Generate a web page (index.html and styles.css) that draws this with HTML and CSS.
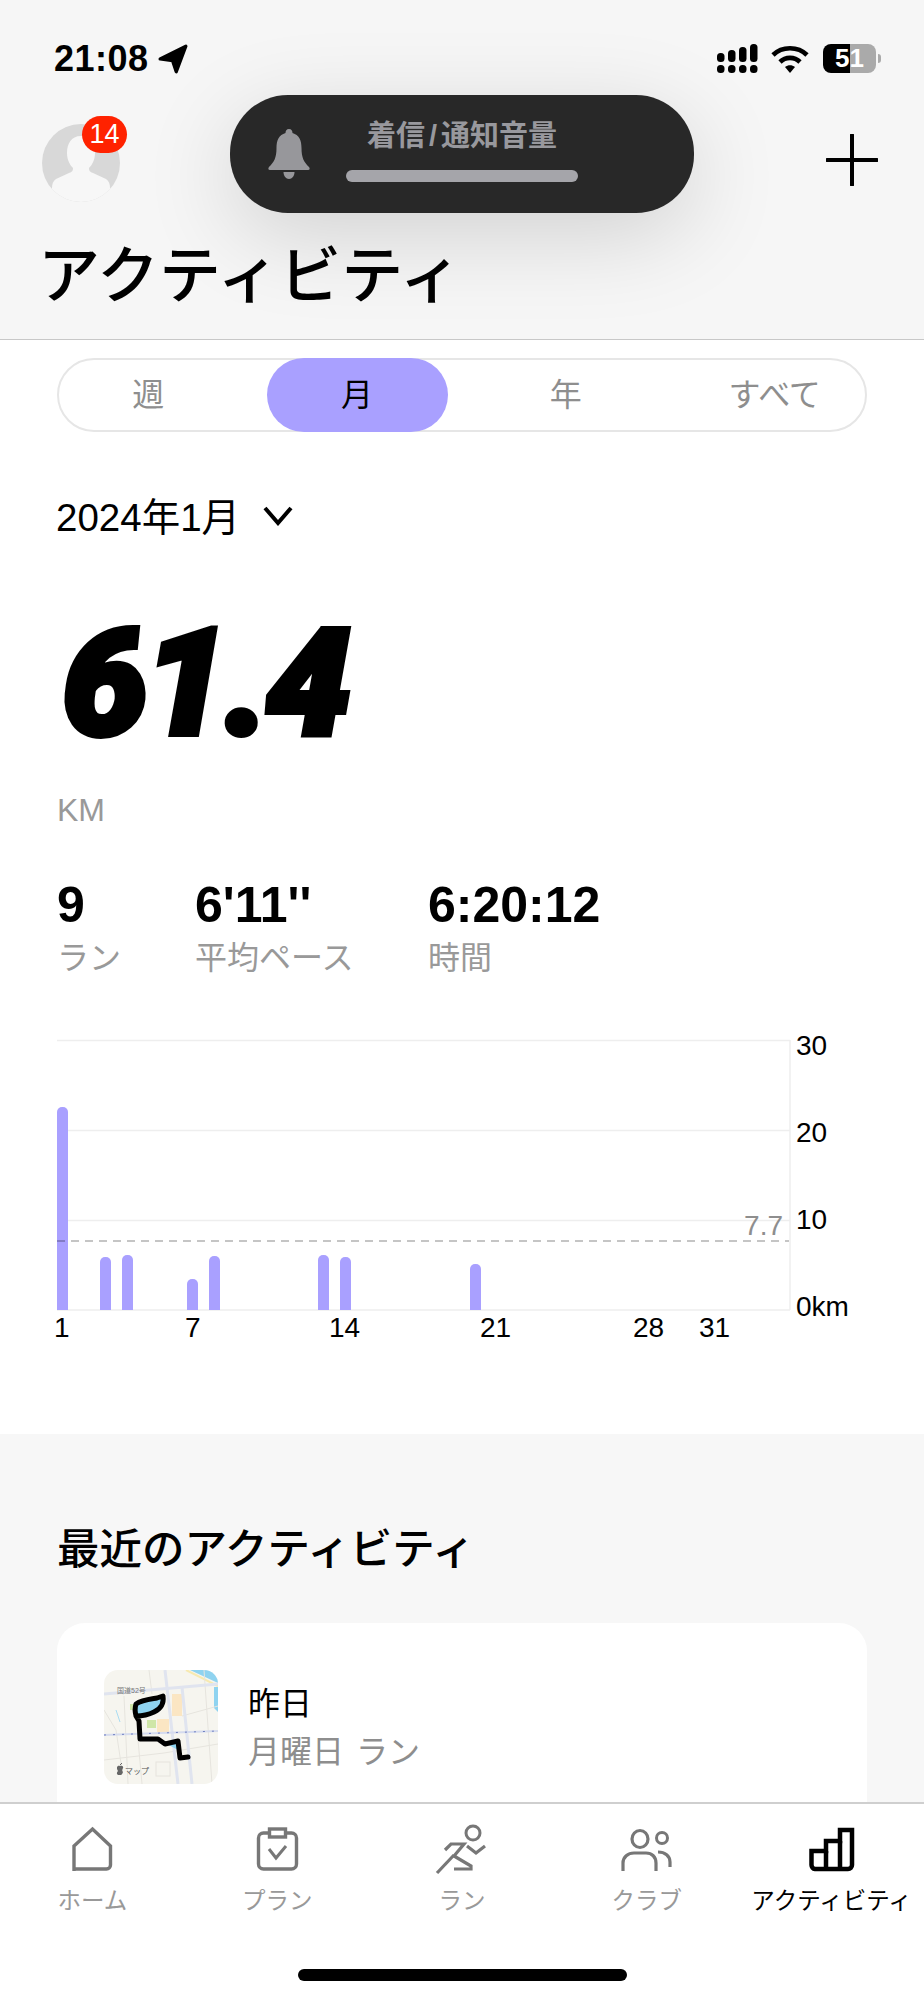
FILE: index.html
```html
<!DOCTYPE html>
<html lang="ja">
  <head>
    <title>アクティビティ</title>
    <meta charset="utf-8" />
    <meta name="viewport" content="width=device-width, initial-scale=1.0" />
    <link rel="stylesheet" href="styles.css">
  </head>

  <body>
    <div class="phone">
      <header class="top">
        <div class="status">
          <div class="clock">
            <span>21:08</span>
            <svg class="loc" viewBox="0 0 28 28" width="30" height="30">
              <path d="M2 14 L26 2 L17 26 L13.500 15.500 Z" fill="#000" stroke="#000" stroke-width="3" stroke-linejoin="round" />
            </svg>
          </div>
          <div class="status-right">
            <svg class="signal" viewBox="0 0 41 29" width="41" height="29">
              <rect x="0" y="9" width="7.5" height="9" rx="3.5" />
              <rect x="11" y="6" width="7.5" height="12" rx="3.5" />
              <rect x="22" y="3" width="7.5" height="15" rx="3.5" />
              <rect x="33" y="0" width="7.5" height="18" rx="3.5" />
              <rect x="0" y="21" width="7.5" height="8" rx="3.5" />
              <rect x="11" y="21" width="7.5" height="8" rx="3.5" />
              <rect x="22" y="21" width="7.5" height="8" rx="3.5" />
              <rect x="33" y="21" width="7.5" height="8" rx="3.5" />
            </svg>
            <svg class="wifi" viewBox="0 0 38 29" width="38" height="29">
              <path d="M2 11 C11 2 27 2 36 11" fill="none" stroke="#000" stroke-width="4.6" />
              <path d="M9 18 C14.5 12.5 23.5 12.5 29 18" fill="none" stroke="#000" stroke-width="4.6" />
              <path d="M14 23 C17 20.5 21 20.5 24 23 L19 29 Z" fill="#000" />
            </svg>
            <div class="battery"><span class="battery-num">51</span></div>
            <div class="battery-nub"></div>
          </div>
        </div>

        <div class="top-row">
          <div class="avatar">
            <svg viewBox="0 0 78 78" width="78" height="78">
              <defs>
                <clipPath id="avatarClip"><circle cx="39" cy="39" r="39" /></clipPath>
              </defs>
              <g clip-path="url(#avatarClip)">
                <rect width="78" height="78" fill="#d8d8d8" />
                <path d="M39 12 C29 12 25 20 25 29 C25 36 28 41 31 44 C31 47 30 48 27 49 L14 55 C11 57 10 60 10 64 L10 78 L68 78 L68 64 C68 60 67 57 64 55 L51 49 C48 48 47 47 47 44 C50 41 53 36 53 29 C53 20 49 12 39 12 Z" fill="#f7f7f7" />
              </g>
            </svg>
            <span class="badge">14</span>
          </div>
          <svg class="plus" viewBox="0 0 52 52" width="52" height="52">
            <path d="M26 1 V51 M1 26 H51" stroke="#000" stroke-width="4" stroke-linecap="round" fill="none" />
          </svg>
        </div>

        <h1 class="page-title">アクティビティ</h1>
      </header>

      <div class="volume">
        <svg class="bell" viewBox="0 0 42 50" width="42" height="50">
          <path d="M21 0 C18.5 0 17.5 2 17.5 4 C11 6 8.5 11 8.5 19 C8.5 29 6 33 1 38 C0 39 0 41 2 41 L40 41 C42 41 42 39 41 38 C36 33 33.5 29 33.5 19 C33.5 11 31 6 24.5 4 C24.5 2 23.5 0 21 0 Z" fill="#97979b" />
          <path d="M15.5 43 H26.5 C26.5 47 24 50 21 50 C18 50 15.5 47 15.5 43 Z" fill="#97979b" />
        </svg>
        <div class="volume-body">
          <div class="volume-title">着信 / 通知音量</div>
          <div class="volume-bar"></div>
        </div>
      </div>

      <div class="scroll">
        <section class="summary">
          <div class="segment">
            <div class="segment-item">週</div>
            <div class="segment-item active">月</div>
            <div class="segment-item">年</div>
            <div class="segment-item">すべて</div>
          </div>

          <div class="period">
            <span>2024年1月</span>
            <svg viewBox="0 0 30 20" width="30" height="20">
              <path d="M2 2 L15 17 L28 2" fill="none" stroke="#000" stroke-width="4" />
            </svg>
          </div>

          <div class="distance">61.4</div>
          <div class="unit">KM</div>

          <div class="stats">
            <div class="stat stat-runs">
              <div class="stat-value">9</div>
              <div class="stat-label">ラン</div>
            </div>
            <div class="stat stat-pace">
              <div class="stat-value">6'11''</div>
              <div class="stat-label">平均ペース</div>
            </div>
            <div class="stat">
              <div class="stat-value">6:20:12</div>
              <div class="stat-label">時間</div>
            </div>
          </div>

          <svg class="chart" viewBox="0 1030 924 320" width="924" height="320">
            <defs>
              <clipPath id="barClip"><rect x="0" y="1030" width="924" height="280" /></clipPath>
            </defs>
            <g stroke="#eeeeee" stroke-width="1.5">
              <path d="M57 1040.5 H790" />
              <path d="M57 1130.5 H790" />
              <path d="M57 1220.5 H790" />
              <path d="M57 1310 H790" />
              <path d="M790 1040 V1310" />
            </g>
            <g fill="#a9a0ff" clip-path="url(#barClip)">
              <rect x="57" y="1107" width="11" height="215" rx="5" />
              <rect x="100" y="1257" width="11" height="65" rx="5" />
              <rect x="122" y="1255" width="11" height="65" rx="5" />
              <rect x="187" y="1279" width="11" height="45" rx="5" />
              <rect x="209" y="1256" width="11" height="65" rx="5" />
              <rect x="318" y="1255" width="11" height="65" rx="5" />
              <rect x="340" y="1257" width="11" height="65" rx="5" />
              <rect x="470" y="1264" width="11" height="60" rx="5" />
            </g>
            <path d="M57 1241 H789" stroke="#000" stroke-opacity="0.3" stroke-width="1.5" stroke-dasharray="8 6" />
            <text class="avg-text" x="783" y="1235" text-anchor="end">7.7</text>
            <g class="axis-text">
              <text x="796" y="1055">30</text>
              <text x="796" y="1142">20</text>
              <text x="796" y="1229">10</text>
              <text x="796" y="1316">0km</text>
              <text x="54" y="1337">1</text>
              <text x="185" y="1337">7</text>
              <text x="329" y="1337">14</text>
              <text x="480" y="1337">21</text>
              <text x="633" y="1337">28</text>
              <text x="699" y="1337">31</text>
            </g>
          </svg>
        </section>

        <section class="recent">
          <h2 class="recent-title">最近のアクティビティ</h2>
          <div class="card">
            <svg class="map" viewBox="0 0 114 114" width="114" height="114">
              <rect width="114" height="114" fill="#f6f5ef" />
              <path d="M86 0 L114 13 V0 Z" fill="#8fd3f0" />
              <path d="M110 17 L114 17 L114 42 L110 38 Z" fill="#8fd3f0" />
              <path d="M82 0 L114 16" stroke="#f7e9b0" stroke-width="2" fill="none" />
              <rect x="68" y="24" width="10" height="22" fill="#fbe6c3" />
              <rect x="53" y="49" width="12" height="13" fill="#fbe6c3" />
              <rect x="43" y="50" width="9" height="8" fill="#cfe6a8" />
              <rect x="26" y="34" width="6" height="6" fill="#cfe6a8" />
              <g fill="none" stroke="#e6e4de" stroke-width="1">
                <path d="M20 26 L24 114" />
                <path d="M45 0 L48 24" />
                <path d="M0 90 L60 83 L114 74" />
                <path d="M78 46 L114 36" />
                <path d="M34 70 L38 114" />
                <path d="M0 40 L12 60 L18 100" />
                <rect x="52" y="92" width="14" height="14" />
                <path d="M100 0 L108 114" />
              </g>
              <path d="M12 40 L16 52" fill="none" stroke="#a9dcf2" stroke-width="1" />
              <g fill="none" stroke="#e0e4ef" stroke-width="3">
                <path d="M0 24 L114 14" />
                <path d="M61 0 L74 114" />
                <path d="M78 17 L88 114" />
              </g>
              <path d="M0 65 L114 61" fill="none" stroke="#d5dbee" stroke-width="2" />
              <path d="M0 65 L114 61" fill="none" stroke="#6f7fc0" stroke-width="1" stroke-dasharray="2 7" />
              <text class="map-road" x="13" y="23">国道52号</text>
              <path d="M32 34 C38 30 48 29 53 28 L59 26 C60 33 58 38 50 42 C44 45 38 46 32 46 Z" fill="#8fd3f0" />
              <path d="M61 73 L73 71 L74 80 Z" fill="#8fd3f0" />
              <path d="M32 46 C31 42 31 37 32 34 C38 30 48 29 53 28 L59 26 C60 33 58 38 50 42 C44 45 38 46 32 46 L35 51 L36 69 L54 69 L61 74 L74 71 L76 88 L84 87" fill="none" stroke="#000" stroke-width="5" stroke-linejoin="round" stroke-linecap="round" />
              <path d="M14 101 C12 98 13 95 16 96 C18 95 20 97 19 98 C18 100 18 101 19 102 C18 106 16 105 15 105 C13 105 12 103 14 101 Z" fill="#666" />
              <path d="M16 95 L18 93" stroke="#666" stroke-width="1" />
              <text class="map-label" x="21" y="104">マップ</text>
            </svg>
            <div class="card-text">
              <div class="card-title">昨日</div>
              <div class="card-sub">月曜日 ラン</div>
            </div>
          </div>
        </section>
      </div>

      <nav class="tabbar">
        <div class="tab">
          <svg viewBox="0 0 65 55" width="65" height="55">
            <path d="M14 50 V25 L32.5 8 L50.500 25 V44 A4 4 0 0 1 46.500 48 H14" fill="none" stroke="#777" stroke-width="3.4" />
          </svg>
          <span>ホーム</span>
        </div>
        <div class="tab">
          <svg viewBox="0 0 65 55" width="65" height="55">
            <rect x="13.5" y="12" width="38" height="36" rx="5" fill="none" stroke="#777" stroke-width="3.4" />
            <rect x="24.5" y="8" width="16" height="8" fill="#fff" stroke="#777" stroke-width="3.4" />
            <path d="M24 28 L31 37 L41 25" fill="none" stroke="#777" stroke-width="3" />
          </svg>
          <span>プラン</span>
        </div>
        <div class="tab">
          <svg viewBox="10 10 65 55" width="65" height="55">
            <circle cx="54" cy="22" r="7" fill="none" stroke="#777" stroke-width="3" />
            <path d="M26 39 L32 33 H45 L35 45 L52 55 V58 H35" fill="none" stroke="#777" stroke-width="3.2" />
            <path d="M18 62 L35 44" fill="none" stroke="#777" stroke-width="3.2" />
            <path d="M48 35 L57 42 L66 35" fill="none" stroke="#777" stroke-width="3.2" />
          </svg>
          <span>ラン</span>
        </div>
        <div class="tab">
          <svg viewBox="194 10 65 55" width="65" height="55">
            <ellipse cx="220" cy="28" rx="8" ry="8.5" fill="none" stroke="#777" stroke-width="3.2" />
            <circle cx="242" cy="27" r="5.5" fill="none" stroke="#777" stroke-width="3" />
            <path d="M203 60 V52 C203 46 208 42 214 42 H226 C232 42 236 46 236 52 V60" fill="none" stroke="#777" stroke-width="3.2" />
            <path d="M238 41 C245 41 250 45 250 51 V56" fill="none" stroke="#777" stroke-width="3.2" />
          </svg>
          <span>クラブ</span>
        </div>
        <div class="tab tab-active">
          <svg viewBox="0 0 65 55" width="65" height="55">
            <path d="M41 9 H53 V44 A4 4 0 0 1 49 48 H16 A4 4 0 0 1 12.500 44 V30 H27 V20 H41 Z" fill="none" stroke="#000" stroke-width="4.500" />
            <path d="M27 30 V48 M41 20 V48" fill="none" stroke="#000" stroke-width="4.500" />
          </svg>
          <span>アクティビティ</span>
        </div>
      </nav>
      <div class="home-bar"></div>
    </div>
  </body>
</html>
```

FILE: styles.css
```css
body {
  margin: 0;
  background-color: #fff;
  font-family: "Liberation Sans", "Noto Sans CJK JP", sans-serif;
  color: #000;
}

.phone {
  position: relative;
  width: 924px;
  height: 2000px;
  overflow: hidden;
  background-color: #fff;
}

.top {
  height: 339px;
  background-color: #f6f6f6;
  border-bottom: 1px solid #c8c8c8;
}

.status {
  display: flex;
  justify-content: space-between;
  align-items: center;
  height: 29px;
  padding: 44px 43px 0 54px;
}

.clock {
  display: flex;
  align-items: center;
  gap: 9px;
  font-size: 36px;
  font-weight: bold;
  letter-spacing: 0.5px;
}

.status-right {
  display: flex;
  align-items: center;
}

.wifi {
  margin-left: 13px;
}

.battery {
  display: flex;
  align-items: center;
  justify-content: center;
  width: 53px;
  height: 29px;
  margin-left: 14px;
  border-radius: 8px;
  background: linear-gradient(to right, #000 51%, #aaa 51%);
}

.battery-num {
  color: #fff;
  font-size: 26px;
  font-weight: bold;
}

.battery-nub {
  width: 3px;
  height: 9px;
  margin-left: 2px;
  border-radius: 0 3px 3px 0;
  background-color: #aaa;
}

.top-row {
  display: flex;
  justify-content: space-between;
  align-items: center;
  height: 80px;
  margin-top: 50px;
  padding: 0 46px 0 42px;
}

.plus {
  margin-top: -6px;
}

.avatar {
  position: relative;
  width: 78px;
  height: 78px;
}

.avatar svg {
  display: block;
}

.badge {
  position: absolute;
  left: 40px;
  top: -8px;
  width: 45px;
  height: 37px;
  border-radius: 19px;
  background-color: #ff2200;
  color: #fff;
  font-size: 27px;
  line-height: 37px;
  text-align: center;
}

.page-title {
  margin: 36px 0 0 38px;
  font-size: 62px;
  font-weight: 500;
  line-height: 76px;
}

.volume {
  position: absolute;
  left: 230px;
  top: 95px;
  display: flex;
  align-items: center;
  width: 464px;
  height: 118px;
  box-sizing: border-box;
  padding: 0 0 0 38px;
  border-radius: 58px;
  background-color: #282828;
  box-shadow: 0 22px 90px rgba(0, 0, 0, 0.15);
}

.volume-body {
  width: 232px;
  margin-left: 36px;
}

.volume-title {
  color: #98989d;
  font-size: 29px;
  font-weight: bold;
  line-height: 36px;
  text-align: center;
  white-space: nowrap;
  word-spacing: -4px;
  margin-top: -1px;
}

.volume-bar {
  height: 12px;
  margin-top: 16px;
  margin-bottom: 8px;
  border-radius: 6px;
  background-color: #a5a5aa;
}

.scroll {
  height: 1462px;
  overflow: hidden;
}

.summary {
  height: 1094px;
  box-sizing: border-box;
  padding-top: 18px;
}

.segment {
  display: flex;
  gap: 28px;
  width: 810px;
  height: 74px;
  box-sizing: border-box;
  margin-left: 57px;
  border: 2px solid #e6e6e6;
  border-radius: 37px;
}

.segment-item {
  width: 181px;
  height: 74px;
  margin-top: -2px;
  border-radius: 37px;
  color: #8e8e8e;
  font-size: 32px;
  line-height: 74px;
  text-align: center;
}

.segment-item:first-child {
  margin-left: -1px;
}

.segment-item.active {
  background-color: #a9a0ff;
  color: #000;
}

.period {
  display: flex;
  align-items: center;
  gap: 23px;
  height: 46px;
  margin: 59px 0 0 56px;
  font-size: 38.5px;
}

.period svg {
  margin-top: 4px;
}

.distance {
  width: 340px;
  margin: 62px 0 0 62px;
  font-family: Roboto, "Liberation Sans", sans-serif;
  font-size: 148px;
  font-style: italic;
  font-weight: 900;
  line-height: 170px;
  letter-spacing: -4px;
  -webkit-text-stroke: 6px #000;
  transform: scaleX(1.03);
  transform-origin: left center;
}

.unit {
  margin: 21px 0 0 57px;
  color: #999;
  font-size: 32px;
  line-height: 40px;
}

.stats {
  display: flex;
  margin: 47px 0 0 57px;
}

.stat-runs {
  width: 138px;
}

.stat-pace {
  width: 233px;
}

.stat-value {
  font-size: 50px;
  font-weight: bold;
  line-height: 56px;
}

.stat-label {
  margin-top: 2px;
  color: #999;
  font-size: 32px;
  line-height: 46px;
}

.chart {
  display: block;
  position: absolute;
  left: 0;
  top: 1030px;
}

.axis-text text {
  font-size: 28px;
  fill: #000;
}

.avg-text {
  font-size: 28px;
  fill: #8e8e8e;
}

.recent {
  height: 368px;
  box-sizing: border-box;
  padding: 88px 57px 0;
  background-color: #f7f7f7;
}

.recent-title {
  margin: 0;
  font-size: 42.5px;
  font-weight: 500;
  line-height: 56px;
}

.card {
  display: flex;
  gap: 30px;
  height: 300px;
  box-sizing: border-box;
  margin-top: 45px;
  padding: 47px 47px 0;
  border-radius: 28px;
  background-color: #fff;
}

.map {
  display: block;
  border-radius: 14px;
}

.map-road {
  font-size: 7px;
  fill: #777;
}

.map-label {
  font-size: 8px;
  fill: #555;
}

.card-title {
  margin-top: 12px;
  font-size: 32px;
  line-height: 44px;
}

.card-sub {
  margin-top: 4px;
  color: #8e8e8e;
  font-size: 32px;
  line-height: 44px;
  word-spacing: 3px;
}

.tabbar {
  display: grid;
  grid-template-columns: repeat(5, 1fr);
  height: 198px;
  box-sizing: border-box;
  padding-top: 17px;
  border-top: 2px solid #cfcfcf;
  background-color: #fff;
}

.tab {
  display: flex;
  flex-direction: column;
  align-items: center;
  color: #999;
  font-size: 23.500px;
  line-height: 30px;
  white-space: nowrap;
}

.tab svg {
  display: block;
  margin-bottom: 10px;
}

.tab-active {
  color: #000;
}

.home-bar {
  position: absolute;
  left: 298px;
  top: 1969px;
  width: 329px;
  height: 12px;
  border-radius: 6px;
  background-color: #000;
}
```
